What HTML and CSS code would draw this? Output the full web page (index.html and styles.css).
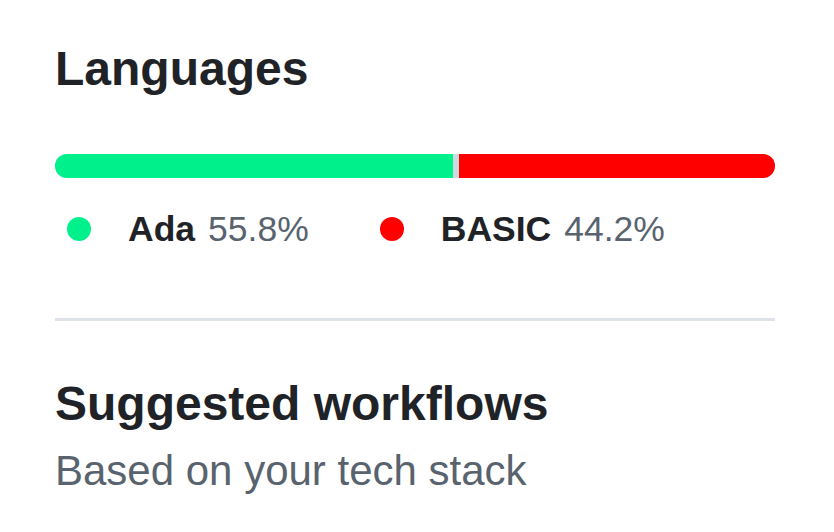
FILE: index.html
```html
<!DOCTYPE html>
<html lang="en">
<head>
<meta charset="utf-8">
<title>Languages</title>
<link rel="stylesheet" href="styles.css">
</head>
<body>
<div class="sidebar">
  <section class="section">
    <h2 class="heading">Languages</h2>
    <div class="bar">
      <span class="seg seg-ada" style="width: 55.3%"></span>
      <span class="seg seg-basic"></span>
    </div>
    <ul class="legend">
      <li class="legend-item">
        <span class="dot dot-ada"></span>
        <span class="lang">Ada</span>
        <span class="pct">55.8%</span>
      </li>
      <li class="legend-item">
        <span class="dot dot-basic"></span>
        <span class="lang">BASIC</span>
        <span class="pct">44.2%</span>
      </li>
    </ul>
  </section>
  <hr class="divider">
  <section class="section">
    <h2 class="heading heading-2">Suggested workflows</h2>
    <p class="sub">Based on your tech stack</p>
  </section>
</div>
</body>
</html>
```
FILE: styles.css
```css
html, body {
  margin: 0;
  padding: 0;
  background: #ffffff;
}
body {
  font-family: "Liberation Sans", Arial, sans-serif;
  color: #1f2328;
}
.sidebar {
  width: 720px;
  padding: 39px 0 0 55px;
}
.heading {
  margin: 0;
  font-size: 48px;
  line-height: 60px;
  font-weight: 700;
  color: #1f2328;
}
.bar {
  margin-top: 55px;
  height: 24px;
  border-radius: 12px;
  overflow: hidden;
  display: flex;
  background: #d1d9e0;
}
.seg {
  display: block;
  height: 100%;
}
.seg-ada {
  background: #00f08c;
  margin-right: 6px;
}
.seg-basic {
  flex: 1;
  background: #ff0000;
}
.legend {
  list-style: none;
  margin: 29px 0 0 0;
  padding: 0 0 0 12px;
  display: flex;
  gap: 71px;
}
.legend-item {
  display: flex;
  align-items: center;
  font-size: 35.5px;
  line-height: 44px;
}
.dot {
  width: 24px;
  height: 24px;
  border-radius: 50%;
  margin-right: 37px;
}
.dot-ada { background: #00f08c; }
.dot-basic { background: #ff0000; }
.lang {
  font-weight: 700;
  color: #1f2328;
  margin-right: 13px;
}
.pct {
  color: #59636e;
}
.divider {
  margin: 67px 0 0 0;
  border: 0;
  height: 3px;
  background: #dde3e8;
}
.heading-2 {
  margin-top: 53px;
}
.sub {
  margin: 11px 0 0 0;
  font-size: 42px;
  line-height: 52px;
  color: #59636e;
}
```
